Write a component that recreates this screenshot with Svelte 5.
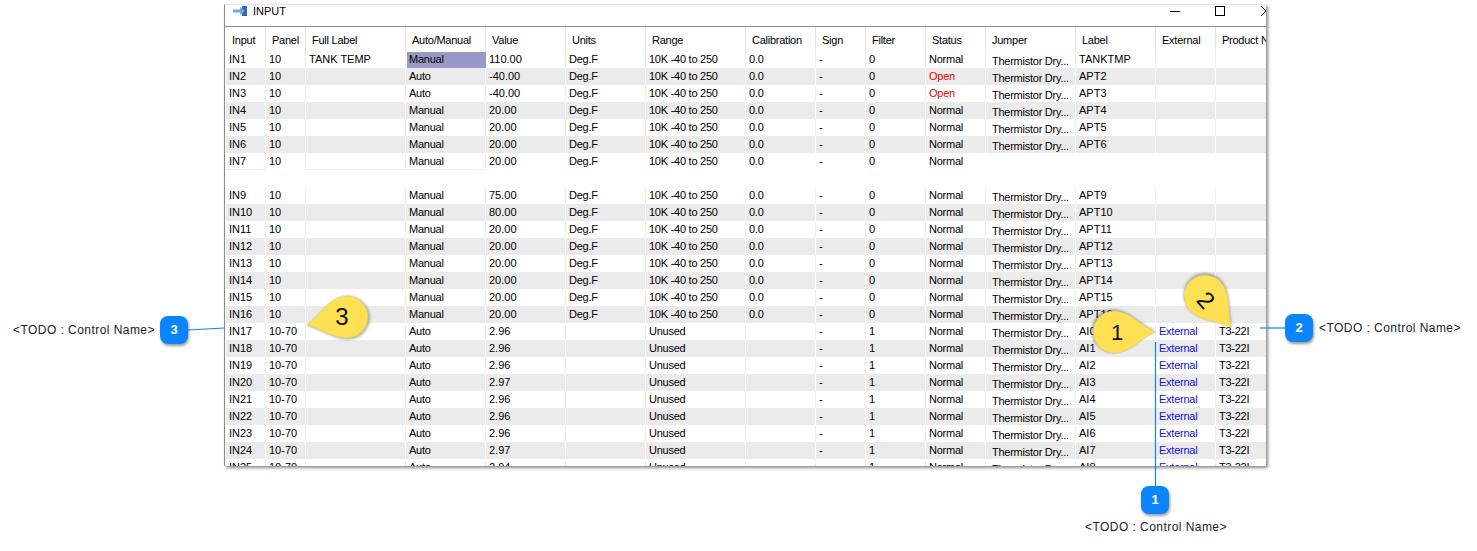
<script>
  const columns = ['Input', 'Panel', 'Full Label', 'Auto/Manual', 'Value', 'Units', 'Range', 'Calibration', 'Sign', 'Filter', 'Status', 'Jumper', 'Label', 'External', 'Product N'];

  const configured = [
    ['Manual', '110.00', 'Normal', 'TANKTMP'],
    ['Auto', '-40.00', 'Open', 'APT2'],
    ['Auto', '-40.00', 'Open', 'APT3'],
    ['Manual', '20.00', 'Normal', 'APT4'],
    ['Manual', '20.00', 'Normal', 'APT5'],
    ['Manual', '20.00', 'Normal', 'APT6'],
    ['Manual', '20.00', 'Normal', ''],
    null,
    ['Manual', '75.00', 'Normal', 'APT9'],
    ['Manual', '80.00', 'Normal', 'APT10'],
    ['Manual', '20.00', 'Normal', 'APT11'],
    ['Manual', '20.00', 'Normal', 'APT12'],
    ['Manual', '20.00', 'Normal', 'APT13'],
    ['Manual', '20.00', 'Normal', 'APT14'],
    ['Manual', '20.00', 'Normal', 'APT15'],
    ['Manual', '20.00', 'Normal', 'APT16']
  ];
  const analog = ['2.96', '2.96', '2.96', '2.97', '2.96', '2.96', '2.96', '2.97', '2.94'];

  const rows = [];
  configured.forEach((r, i) => {
    if (!r) {
      rows.push(null);
      return;
    }
    rows.push({
      input: 'IN' + (i + 1), panel: '10', full: i === 0 ? 'TANK TEMP' : '', mode: r[0], value: r[1],
      units: 'Deg.F', range: '10K -40 to 250', cal: '0.0', filter: '0', status: r[2],
      jumper: r[3] ? 'Thermistor Dry...' : '', label: r[3], external: '', product: ''
    });
  });
  analog.forEach((v, i) => {
    rows.push({
      input: 'IN' + (i + 17), panel: '10-70', full: '', mode: 'Auto', value: v,
      units: '', range: 'Unused', cal: '', filter: '1', status: 'Normal',
      jumper: 'Thermistor Dry...', label: 'AI' + i, external: 'External', product: 'T3-22I'
    });
  });

  const drop = 'M-41 0C-27-6-16-21 0-21A21 21 0 0 1 0 21C-16 21-27 6-41 0Z';
</script>

<div class="page">
  <div class="window">
    <div class="titlebar">
      <svg class="app-icon" width="14" height="11" viewBox="0 0 14 11">
        <rect x="9" y="0" width="5" height="10" fill="#2f6aa8" />
        <path d="M0 3.5H7V1L12 5 7 9V6.5H0Z" fill="#6fa8dc" />
      </svg>
      <span class="title">INPUT</span>
      <span class="min"></span>
      <span class="max"></span>
      <svg class="close" width="10" height="10" viewBox="0 0 10 10">
        <path d="M0 0L10 10M10 0L0 10" stroke="#000" fill="none" />
      </svg>
    </div>
    <div class="table">
      <div class="row head">
        {#each columns as c}
          <div class="cell">{c}</div>
        {/each}
      </div>
      {#each rows as r, i}
        {#if r}
          <div class="row" class:alt={i % 2 === 1} class:last={i === 6}>
            <div class="cell num-col">{r.input}</div>
            <div class="cell num-col">{r.panel}</div>
            <div class="cell caps">{r.full}</div>
            <div class="cell" class:picked={i === 0}>{r.mode}</div>
            <div class="cell num-col">{r.value}</div>
            <div class="cell">{r.units}</div>
            <div class="cell">{r.range}</div>
            <div class="cell">{r.cal}</div>
            <div class="cell">-</div>
            <div class="cell">{r.filter}</div>
            <div class="cell" class:open={r.status === 'Open'}>{r.status}</div>
            <div class="cell jumper">{r.jumper}</div>
            <div class="cell caps">{r.label}</div>
            <div class="cell link">{r.external}</div>
            <div class="cell">{r.product}</div>
          </div>
        {:else}
          <div class="row blank"></div>
        {/if}
      {/each}
    </div>
  </div>

  <svg class="marks" width="1477" height="551" viewBox="0 0 1477 551">
    <g stroke="#0a84ff" stroke-width="1.2" fill="none">
      <path d="M188 330L224 328" />
      <path d="M1260 328H1285" />
      <path d="M1155.5 342V486" />
    </g>
    <g class="drops">
      <path d={drop} transform="translate(1114 332) rotate(180)" />
      <path d={drop} transform="translate(1205 296) rotate(230)" />
      <path d={drop} transform="translate(347 317) rotate(-11)" />
    </g>
    <text class="digit one" x="1117" y="340">1</text>
    <text class="digit" transform="translate(1206 300) rotate(48)" y="8.5">2</text>
    <text class="digit" x="342" y="325">3</text>
  </svg>

  <div class="badge b1">1</div>
  <div class="badge b2">2</div>
  <div class="badge b3">3</div>
  <span class="note n1">&lt;TODO : Control Name&gt;</span>
  <span class="note n2">&lt;TODO : Control Name&gt;</span>
  <span class="note n3">&lt;TODO : Control Name&gt;</span>
</div>

<style>
  :global(body) {
    margin: 0;
    background: #fff;
  }
  .page {
    position: relative;
    width: 1477px;
    height: 551px;
    padding: 4px 0 0 224px;
    box-sizing: border-box;
    overflow: hidden;
    font-family: "Liberation Sans", Arial, sans-serif;
    font-size: 11px;
    color: #000;
  }
  .window {
    width: 1042px;
    height: 462px;
    box-sizing: border-box;
    background: #fff;
    border-left: 1px solid #8c8c8c;
    border-top: 1px solid #e6e6e6;
    box-shadow: 2px 2px 3px rgba(0, 0, 0, 0.45);
    overflow: hidden;
  }
  .titlebar {
    display: flex;
    align-items: center;
    height: 22px;
    box-sizing: border-box;
    padding: 0 0 9px 8px;
    border-bottom: 1px solid #8c8c96;
  }
  .app-icon {
    margin-right: 6px;
    flex-shrink: 0;
  }
  .title {
    width: 917px;
    flex-shrink: 0;
  }
  .min {
    width: 10px;
    height: 1px;
    background: #000;
    margin-right: 35px;
    flex-shrink: 0;
  }
  .max {
    width: 8px;
    height: 8px;
    border: 1px solid #000;
    margin-right: 36px;
    flex-shrink: 0;
  }
  .close {
    flex-shrink: 0;
  }
  .table {
    padding-left: 1px;
    width: 1060px;
  }
  .row {
    display: grid;
    grid-template-columns: 40px 40px 100px 80px 80px 80px 100px 70px 50px 60px 60px 90px 80px 60px 60px;
    height: 17px;
    line-height: 16px;
  }
  .cell {
    box-sizing: border-box;
    padding-left: 3px;
    border-right: 1px solid #f0f0f0;
    white-space: nowrap;
    overflow: hidden;
    letter-spacing: -0.25px;
  }
  .head {
    height: 24px;
    line-height: 26px;
  }
  .head .cell {
    padding-left: 6px;
    border-right-color: #e6e6e6;
  }
  .alt {
    background: #ebebeb;
  }
  .alt .cell {
    border-right-color: #fff;
  }
  .last .cell:nth-child(1),
  .last .cell:nth-child(3),
  .last .cell:nth-child(4) {
    box-shadow: inset 0 -1px 0 #f0f0f0;
  }
  .last .cell:nth-child(n + 5) {
    border-right-color: transparent;
  }
  .picked {
    background: #9999c8;
    border-left: 1px solid #fff;
    border-top: 1px solid #fff;
    border-right-color: #9999c8;
    padding-left: 2px;
    line-height: 15px;
  }
  .caps,
  .num-col {
    letter-spacing: 0;
  }
  .open {
    color: #f00000;
  }
  .jumper {
    padding: 2px 0 0 6px;
  }
  .link {
    color: #1212e0;
  }
  .marks {
    position: absolute;
    left: 0;
    top: 0;
    pointer-events: none;
  }
  .drops path {
    fill: #ffe052;
    stroke: #d8c878;
    stroke-width: 0.6;
    filter: drop-shadow(1px 1px 1.5px rgba(0, 0, 0, 0.4));
  }
  .digit {
    font-family: "Liberation Sans", Arial, sans-serif;
    font-size: 24px;
    fill: #111;
    text-anchor: middle;
  }
  .one {
    font-size: 22px;
  }
  .badge {
    position: absolute;
    width: 28px;
    height: 28px;
    border-radius: 8px;
    background: #0a84ff;
    color: #fff;
    font-size: 13px;
    font-weight: bold;
    line-height: 28px;
    text-align: center;
    box-shadow: 1px 2px 3px rgba(0, 0, 0, 0.4);
  }
  .b1 {
    left: 1141px;
    top: 486px;
  }
  .b2 {
    left: 1285px;
    top: 314px;
  }
  .b3 {
    left: 160px;
    top: 316px;
  }
  .note {
    position: absolute;
    font-size: 12px;
    letter-spacing: 0.45px;
    color: #222;
    white-space: nowrap;
  }
  .n1 {
    left: 1085px;
    top: 520px;
  }
  .n2 {
    left: 1319px;
    top: 321px;
  }
  .n3 {
    left: 13px;
    top: 323px;
  }
</style>
